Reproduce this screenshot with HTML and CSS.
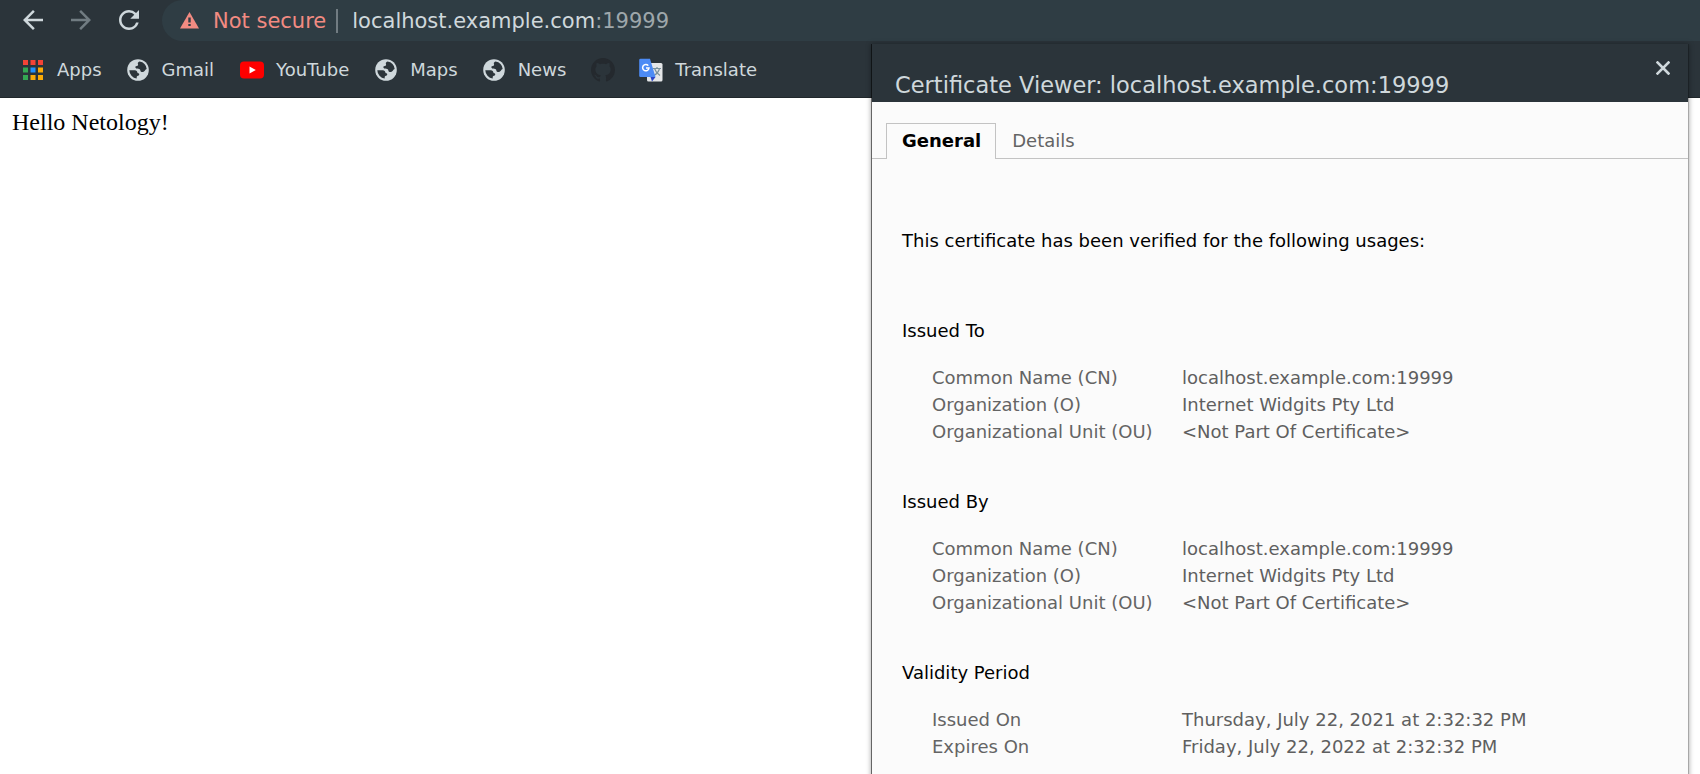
FILE: index.html
```html
<!DOCTYPE html>
<html lang="en">
<head>
<meta charset="utf-8">
<title>localhost.example.com:19999</title>
<link rel="stylesheet" href="styles.css">
</head>
<body>
<svg class="defs" width="0" height="0">
  <symbol id="globe" viewBox="0 0 24 24"><circle cx="12" cy="12" r="10.8" fill="#cfd8dc"/><path fill="#2b343a" d="M13.5 3.6c-.6.5-1.8.9-1.7 2 .1 1 .6 1.200.1 2-.5.7-1.900.3-2.400 1-.4.700.1 1.700.8 1.900 1.300.4 2.900-.1 3.700 1 .5.700.200 1.700 1 2.200 1.100.6 2.900.200 3.800-1 .6-.8 1.100-1.400 1.900-1.600A8.700 8.700 0 0 0 13.500 3.600zM3.300 12.300h5.500c1.700 0 2.400 1 2.600 2.300.1.700 1 .7 1.500 1 .6.500.4 1.500-.2 1.900-1 .6-2 .5-2 1.500v1.600A8.700 8.700 0 0 1 3.300 12.300z"/></symbol>
</svg>
<header class="chrome">
  <div class="toolbar">
    <svg class="nav" viewBox="0 0 24 24"><path fill="#cfd8dc" d="M20 11H7.830l5.590-5.590L12 4l-8 8 8 8 1.410-1.410L7.830 13H20v-2z"/></svg>
    <svg class="nav" viewBox="0 0 24 24"><path fill="#717c82" d="M12 4l-1.410 1.410L16.170 11H4v2h12.170l-5.580 5.590L12 20l8-8z"/></svg>
    <svg class="nav" viewBox="0 0 24 24"><path fill="#cfd8dc" d="M17.650 6.350A7.958 7.958 0 0 0 12 4c-4.420 0-7.990 3.580-7.990 8s3.570 8 7.990 8c3.730 0 6.840-2.550 7.730-6h-2.080A5.990 5.990 0 0 1 12 18c-3.310 0-6-2.690-6-6s2.690-6 6-6c1.660 0 3.140.69 4.220 1.780L13 11h7V4l-2.350 2.350z"/></svg>
    <div class="omnibox">
      <svg class="warn" viewBox="0 0 19 17"><path fill="#f28b82" d="M9.500 0L19 16.500H0z"/><path fill="#2f3d44" d="M8.300 5.500h2.400v5H8.300zM8.300 12h2.400v2H8.300z"/></svg>
      <span class="insecure">Not secure</span>
      <span class="divider"></span>
      <span class="url">localhost.example.com<span class="port">:19999</span></span>
    </div>
  </div>
  <nav class="bookmarks">
    <a class="bm"><svg viewBox="0 0 24 24"><path fill="#f44336" d="M2 2h5v5H2zM9.500 2h5v5h-5zM17 2h5v5h-5z"/><path fill="#34a853" d="M2 9.500h5v5H2zM2 17h5v5H2z"/><path fill="#2490fb" d="M9.500 9.500h5v5h-5z"/><path fill="#fbaa05" d="M17 9.500h5v5h-5zM9.500 17h5v5h-5zM17 17h5v5h-5z"/></svg>Apps</a>
    <a class="bm"><svg viewBox="0 0 24 24"><use href="#globe"/></svg>Gmail</a>
    <a class="bm youtube"><svg viewBox="0 0 24 24"><rect y="3.500" width="24" height="17" rx="4" fill="#f00"/><path fill="#fff" d="M9.500 8.400v7.200l6.300-3.600z"/></svg>YouTube</a>
    <a class="bm maps"><svg viewBox="0 0 24 24"><use href="#globe"/></svg>Maps</a>
    <a class="bm"><svg viewBox="0 0 24 24"><use href="#globe"/></svg>News</a>
    <a class="bm github"><svg viewBox="0 0 16 16"><path fill="#24292e" d="M8 0C3.580 0 0 3.580 0 8c0 3.540 2.290 6.530 5.470 7.590.4.070.55-.17.55-.38 0-.19-.010-.82-.010-1.490-2.010.37-2.530-.49-2.690-.94-.09-.23-.48-.94-.82-1.130-.28-.15-.68-.52-.010-.53.63-.010 1.080.58 1.230.82.72 1.210 1.870.87 2.330.66.070-.52.28-.87.510-1.070-1.780-.2-3.640-.89-3.640-3.950 0-.87.310-1.590.82-2.150-.080-.2-.36-1.020.080-2.120 0 0 .67-.21 2.200.82.640-.18 1.320-.27 2-.27s1.360.090 2 .27c1.530-1.040 2.200-.82 2.200-.82.440 1.100.160 1.920.080 2.120.510.560.820 1.270.820 2.150 0 3.070-1.870 3.750-3.650 3.950.29.25.54.73.54 1.480 0 1.070-.010 1.930-.010 2.200 0 .21.150.46.550.38A8.013 8.013 0 0 0 16 8c0-4.420-3.580-8-8-8z"/></svg></a>
    <a class="bm"><svg viewBox="0 0 24 24"><rect x="8" y="5" width="15.500" height="18.500" rx="1.500" fill="#e4e6e8"/><path d="M11.500 19h5L13 23.500z" fill="#2a45c8"/><path d="M14 10.500h8M18 9v1.500M20.500 10.500c-.8 3-3 5.500-5.500 7M15.500 10.500c1 3 3 5.500 5.500 7" stroke="#78909c" stroke-width="1.200" fill="none"/><path d="M1.500.8h9.500L16.500 19H1.500A1.300 1.300 0 0 1 .2 17.700V2A1.300 1.300 0 0 1 1.500.8z" fill="#4c8bf5"/><path d="M9.300 7.600A3.200 3.200 0 1 0 10 10H7" stroke="#fff" stroke-width="1.500" fill="none"/></svg>Translate</a>
  </nav>
</header>
<main class="page">Hello Netology!</main>
<section class="dialog">
  <div class="titlebar"><h1 class="title">Certificate Viewer: localhost.example.com:19999</h1>
    <svg class="close" viewBox="0 0 14 14"><path d="M1.500 1.500l11 11M12.500 1.500l-11 11" stroke="#cfd8dc" stroke-width="2.600" stroke-linecap="square"/></svg>
  </div>
  <div class="tabs"><span class="tab active">General</span><span class="tab">Details</span></div>
  <div class="content">
    <p class="verified">This certificate has been verified for the following usages:</p>
    <h2 class="heading">Issued To</h2>
    <dl class="fields"><dt>Common Name (CN)</dt><dd>localhost.example.com:19999</dd><dt>Organization (O)</dt><dd>Internet Widgits Pty Ltd</dd><dt>Organizational Unit (OU)</dt><dd>&lt;Not Part Of Certificate&gt;</dd></dl>
    <h2 class="heading">Issued By</h2>
    <dl class="fields"><dt>Common Name (CN)</dt><dd>localhost.example.com:19999</dd><dt>Organization (O)</dt><dd>Internet Widgits Pty Ltd</dd><dt>Organizational Unit (OU)</dt><dd>&lt;Not Part Of Certificate&gt;</dd></dl>
    <h2 class="heading">Validity Period</h2>
    <dl class="fields"><dt>Issued On</dt><dd>Thursday, July 22, 2021 at 2:32:32 PM</dd><dt>Expires On</dt><dd>Friday, July 22, 2022 at 2:32:32 PM</dd></dl>
  </div>
</section>
</body>
</html>
```
FILE: styles.css
```css
* { box-sizing: border-box; }
html, body { height: 100%; }
body { margin: 0; overflow: hidden; background: #fff; font: 18px/27px "DejaVu Sans", sans-serif; }
.defs { position: absolute; }
.chrome { height: 98px; background: #2b343a; border-bottom: 1px solid #20272b; color: #cfd8dc; }
.toolbar { display: flex; height: 41px; padding-left: 18px; }
.nav { width: 30px; height: 30px; margin: 5px 18px 0 0; flex: none; }
.omnibox { flex: 1; display: flex; align-items: center; height: 41px; padding: 2px 0 0 18px; border-radius: 21px 0 0 21px; background: #2f3d44; font-size: 21px; white-space: nowrap; }
.warn { width: 19px; height: 17px; margin: 0 14px 2px 0; }
.insecure { color: #f28b82; }
.divider { width: 2px; height: 24px; margin: 0 14px 2px 10px; background: #717c82; }
.port { color: #9ea7ab; }
.bookmarks { display: flex; align-items: center; gap: 24px; height: 57px; padding-left: 21px; }
.bm { display: flex; align-items: center; gap: 12px; }
.bm svg { width: 24px; height: 24px; flex: none; }
.youtube { margin-left: 2px; }
.maps, .github { margin-left: 1px; }
.page { padding: 11px 12px; font: 24px/27px "Liberation Serif", serif; color: #000; }
.dialog { position: absolute; left: 871px; top: 44px; width: 818px; height: 760px; background: #fbfbfb; background-clip: padding-box; border-left: 1px solid rgba(0,0,0,.5); border-right: 1px solid rgba(0,0,0,.18); box-shadow: 0 0 5px rgba(0,0,0,.35); }
.titlebar { display: flex; justify-content: space-between; height: 58px; padding: 27px 18px 0 23px; background: #2b343a; color: #cfd8dc; }
.title { margin: 0; font-size: 22.500px; font-weight: 400; line-height: 28px; }
.close { width: 14px; height: 14px; margin-top: -10px; }
.tabs { display: flex; height: 57px; padding: 21px 0 0 14px; box-shadow: inset 0 -1px #c3c3c3; }
.tab { height: 36px; padding: 0 16px; line-height: 36px; color: #646464; }
.tab.active { padding: 0 14px 0 15px; line-height: 33px; border: 1px solid #c3c3c3; border-bottom: 0; background: #fbfbfb; color: #000; font-weight: 700; }
.content { padding: 68px 30px 0; }
.verified { margin: 0 0 63px; }
.heading { margin: 0 0 20px; font-size: 18px; font-weight: 400; line-height: 27px; }
.fields { display: grid; grid-template-columns: 250px 1fr; margin: 0 0 43px 30px; color: #646464; }
.fields dd { margin: 0; color: #5f5f5f; }
```
